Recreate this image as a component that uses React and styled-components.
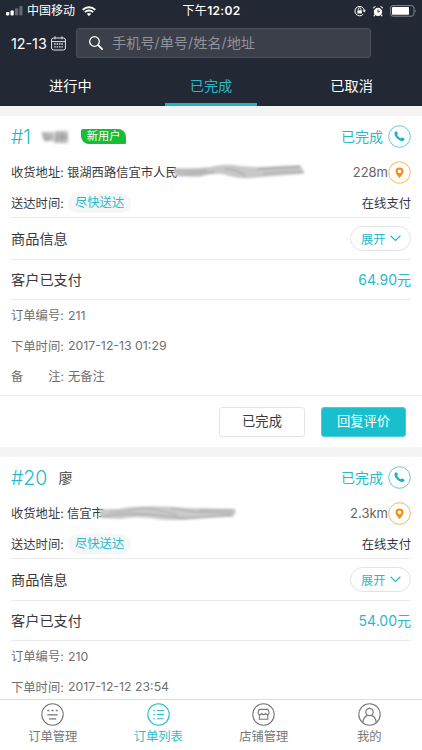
import React from 'react';
import styled, { createGlobalStyle } from 'styled-components';

// Design
const GlobalStyle = createGlobalStyle`
  * {
    box-sizing: border-box;
  }

  body {
    margin: 0;
    background: #f4f4f5;
    font-family: Inter, 'Noto Sans CJK SC', sans-serif;
    overflow: hidden;
  }
`;

const Screen = styled.div`
  display: flex;
  flex-direction: column;
  width: 422px;
  height: 750px;
  overflow: hidden;
  color: #3a3a3c;
  white-space: nowrap;
`;

const Header = styled.header`
  flex: none;
  height: 106px;
  background: #232934;
  color: #fff;
`;

const StatusBar = styled.div`
  display: grid;
  grid-template-columns: 1fr auto 1fr;
  align-items: center;
  height: 21px;
  padding: 1px 5px 0 6px;
  font-size: 12px;
  line-height: 18px;
  font-weight: 500;
`;

const Carrier = styled.div`
  display: flex;
  align-items: center;

  & span {
    margin: 0 7px 0 4px;
    font-weight: 400;
  }
`;

const Clock = styled.div`
  font-weight: 400;
  letter-spacing: 0.3px;

  & b {
    font-weight: 600;
  }
`;

const Indicators = styled.div`
  display: flex;
  justify-content: flex-end;
  align-items: center;
  gap: 7px;
`;

const SearchRow = styled.div`
  display: flex;
  align-items: center;
  height: 30px;
  margin-top: 7px;
  padding-left: 11px;
`;

const DatePick = styled.div`
  display: flex;
  align-items: center;
  gap: 4px;
  width: 65px;
  font-size: 14.3px;
`;

const SearchBox = styled.div`
  display: flex;
  align-items: center;
  gap: 9px;
  width: 295px;
  height: 30px;
  padding-left: 12px;
  border: 1px solid #4c515b;
  border-radius: 3px;
  background: #3a3f4a;
  color: #90939a;
  font-size: 14.2px;
  line-height: 28px;
`;

const Tabs = styled.nav`
  display: grid;
  grid-template-columns: repeat(3, 1fr);
  justify-items: center;
  height: 40px;
  margin-top: 8px;
`;

const Tab = styled.div`
  width: 92px;
  height: 40px;
  border-bottom: 3px solid ${p => (p.$active ? '#1bb4c4' : 'transparent')};
  color: ${p => (p.$active ? '#2bb8c8' : '#fff')};
  font-size: 14.2px;
  line-height: 39px;
  text-align: center;
`;

const List = styled.main`
  flex: 1;
  min-height: 0;
  display: flex;
  flex-direction: column;
  gap: 10px;
  padding-top: 10px;
  overflow: hidden;
`;

const Card = styled.section`
  flex: none;
  height: 331px;
  background: #fff;
`;

const Section = styled.div`
  margin: 0 11px;
  border-bottom: 1px solid #ebebed;
`;

const Line = styled.div`
  display: flex;
  align-items: center;
  justify-content: space-between;
  height: ${p => p.$height}px;
  font-size: ${p => p.$size || 12.3}px;
`;

const Title = styled.span`
  padding-bottom: 2px;
`;

const Group = styled.div`
  display: flex;
  align-items: center;
`;

const OrderNumber = styled.span`
  margin-right: 11px;
  color: #1fb9c9;
  font-size: 19.5px;
  font-weight: 300;
`;

const Customer = styled.span`
  color: #444;
  font-size: 14px;
`;

const NameSlot = styled(Customer)`
  display: flex;
  padding-bottom: 2px;
  margin-left: ${p => (p.$hidden ? -2 : 0)}px;
`;

const NewBadge = styled.span`
  margin-left: 11px;
  width: 45px;
  height: 15px;
  border-radius: 2px 8px 1px 8px;
  background: #16bd35;
  color: #fff;
  font-size: 11.2px;
  line-height: 15px;
  text-align: center;
`;

const State = styled.span`
  margin-right: 5px;
  padding-bottom: 2px;
  color: #2ab9c8;
  font-size: 14px;
`;

const Address = styled(Group)`
  padding-bottom: 1px;
`;

const Distance = styled.span`
  padding-bottom: 1px;
  color: #666;
  font-size: 13px;
`;

const Label = styled.span`
  display: flex;
  justify-content: space-between;
  width: 53px;
  margin-right: ${p => p.$gap || 3}px;
`;

const Smudged = styled.span`
  display: flex;
  margin-left: -5px;
`;

const TimePill = styled.span`
  height: 20px;
  padding: 0 7px;
  border-radius: 10px;
  background: #f5f6f7;
  color: #2ab9c8;
  line-height: 20px;
`;

const Payment = styled.span`
  color: #333541;
`;

const Expand = styled.button`
  display: flex;
  align-items: center;
  gap: 5px;
  width: 61px;
  height: 25px;
  padding: 0 0 0 10px;
  border: 1px solid #e2e3e5;
  border-radius: 13px;
  background: #fff;
  color: #2ab9c8;
  font: inherit;
  font-size: 12.2px;
`;

const Price = styled.span`
  padding-bottom: 2px;
  color: #2ab9c8;
  font-size: 14px;
`;

const Detail = styled.div`
  display: flex;
  align-items: center;
  height: 30.6px;
  padding: 0 11px;
  color: #707070;
  font-size: 12.3px;
`;

const Actions = styled.div`
  display: flex;
  justify-content: flex-end;
  gap: 16px;
  margin-top: 3px;
  padding: 11px 16px 10px 0;
  border-top: 1px solid #ebebed;
`;

const Button = styled.button`
  width: ${p => (p.$primary ? 85 : 86)}px;
  height: 30px;
  padding: 0;
  border: 1px solid ${p => (p.$primary ? '#4acbd5' : '#e4e4e6')};
  border-radius: 3px;
  background: ${p => (p.$primary ? '#19bfcd' : '#fff')};
  color: ${p => (p.$primary ? '#fff' : '#3a3a3c')};
  font: inherit;
  font-size: 13.3px;
  line-height: 27px;
`;

const BottomNav = styled.nav`
  flex: none;
  display: grid;
  grid-template-columns: repeat(4, 1fr);
  height: 51px;
  border-top: 1px solid #dedee0;
  background: #fff;
`;

const NavItem = styled.div`
  display: flex;
  flex-direction: column;
  align-items: center;
  padding-top: 3px;
  color: ${p => (p.$active ? '#2bbdcb' : '#777')};
  font-size: 12.3px;
  line-height: 22px;
`;

// Icons
const SignalIcon = () => (
  <svg width='17' height='10' viewBox='0 0 17 10' fill='#fff'>
    <rect x='0' y='6' width='3.3' height='3.4' rx='.8' />
    <rect x='4.5' y='4.5' width='3.3' height='4.9' rx='.8' />
    <rect x='9' y='2.2' width='3.2' height='7.2' rx='.8' fill='#646973' />
    <rect x='13.3' y='0' width='3.2' height='9.4' rx='.8' fill='#646973' />
  </svg>
);

const WifiIcon = () => (
  <svg width='14' height='11' viewBox='0 0 14 11' fill='none' stroke='#fff' strokeWidth='1.9'>
    <path d='M.7 3.9C4.2.4 9.8.4 13.3 3.9' />
    <path d='M2.9 6.2c2.3-2.3 5.9-2.3 8.2 0' />
    <path d='M4.8 7.8c1.2-1.2 3.2-1.2 4.4 0L7 10.3z' fill='#fff' stroke='none' />
  </svg>
);

const LockIcon = () => (
  <svg width='12' height='12' viewBox='0 0 12 12' fill='none' stroke='#fff'>
    <path d='M9.2 9.2A4.7 4.7 0 1 1 10.3 5.5' />
    <path d='M8.5 5.3h3.4L10.2 7.6z' fill='#fff' stroke='none' />
    <rect x='3.4' y='5.3' width='4.4' height='3.2' fill='#fff' stroke='none' />
    <path d='M4.3 5.4V4.1a1.3 1.3 0 0 1 2.6 0v1.3' strokeWidth='.8' />
  </svg>
);

const AlarmIcon = () => (
  <svg width='10' height='11' viewBox='0 0 10 11' fill='#fff'>
    <circle cx='5' cy='5.9' r='4.2' />
    <path d='M.2 2.8A2 2 0 0 1 2.9.4zM9.8 2.8A2 2 0 0 0 7.1.4z' />
    <path d='M1.9 8.6l-1 1.7M8.1 8.6l1 1.7' stroke='#fff' strokeWidth='1.2' />
    <path d='M5 3.4v2.8l2-1.2' fill='none' stroke='#232934' strokeWidth='.9' />
  </svg>
);

const BatteryIcon = () => (
  <svg width='27' height='12' viewBox='0 0 27 12' fill='none'>
    <rect x='.6' y='.6' width='23.4' height='10.6' rx='2.4' stroke='#858991' />
    <rect x='2' y='2' width='17' height='7.8' rx='.8' fill='#fff' />
    <path d='M25.2 4.2q1.5 1.7 0 3.4z' fill='#858991' />
  </svg>
);

const CalendarIcon = () => (
  <svg width='15' height='15' viewBox='0 0 15 15' fill='none' stroke='#e4e5e8'>
    <rect x='.6' y='2' width='13.8' height='12' rx='2' />
    <path d='M.6 5.6h13.8M4 .3v3M11 .3v3' />
    <path d='M3.2 8h8.8M3.2 10.8h8.8' strokeWidth='1.3' strokeDasharray='1.5 .9' />
  </svg>
);

const SearchIcon = () => (
  <svg width='14' height='14' viewBox='0 0 14 14' fill='none' stroke='#fff' strokeLinecap='round'>
    <circle cx='5.5' cy='5.5' r='4.8' strokeWidth='1.3' />
    <path d='M9.2 9.2l3.9 3.9' strokeWidth='1.8' />
  </svg>
);

const PhoneIcon = () => (
  <svg width='23' height='23' viewBox='0 0 23 23'>
    <circle cx='11.5' cy='11.5' r='10.8' fill='none' stroke='#3cbdca' strokeWidth='.8' />
    <path
      d='M7.4 6.5q.8-.7 1.6.2l.7 1.2q.4.8-.6 1.5c.6 1.6 2 3.1 3.7 3.9.8-.9 1.3-1.1 2.1-.6l1.2.9q.9.7.1 1.5c-1.2 1.3-3.1 1.1-5.1-.2C8.7 13.3 6.8 11.2 6.5 8.9q-.2-1.6.9-2.4z'
      fill='#16b3c3'
    />
  </svg>
);

const PinIcon = () => (
  <svg width='23' height='23' viewBox='0 0 23 23'>
    <circle cx='11.5' cy='11.5' r='10.8' fill='none' stroke='#f7ad4b' strokeWidth='.9' />
    <path
      fillRule='evenodd'
      d='M11.5 6.4a4 4 0 0 0-4 4c0 2.3 1.8 3.7 4 6.6 2.2-2.9 4-4.3 4-6.6a4 4 0 0 0-4-4zm0 2a1.9 1.9 0 1 1 0 3.8 1.9 1.9 0 0 1 0-3.8z'
      fill='#fb8c0c'
    />
  </svg>
);

const ChevronIcon = () => (
  <svg width='11' height='7' viewBox='0 0 11 7' fill='none' stroke='#2ab9c8' strokeWidth='1.2'>
    <path d='M.6.8l4.9 4.7L10.4.8' />
  </svg>
);

const NavIcon = ({ children }) => (
  <svg width='23' height='23' viewBox='0 0 23 23' fill='none' stroke='currentColor' strokeWidth='1.1'>
    <circle cx='11.5' cy='11.5' r='10.7' />
    {children}
  </svg>
);

const ManageIcon = () => (
  <NavIcon>
    <path d='M6.3 7.5h2M10.5 7.5h2M14.7 7.5h2' strokeWidth='1.7' />
    <path d='M6.3 11.8h10.4M8 15.8h7.2' strokeWidth='1.3' />
  </NavIcon>
);

const ListIcon = () => (
  <NavIcon>
    <path d='M6.3 7.5h1.6M6.3 11.6h1.6M6.3 15.7h1.6M9.8 7.5h7M9.8 11.6h7M9.8 15.7h7' />
  </NavIcon>
);

const ShopIcon = () => (
  <NavIcon>
    <path d='M8 6.4h7.2q1 0 1.3 1l.5 2.3q.1 1.7-1.6 1.9-1.3.1-1.9-1-.7 1-1.9 1t-1.9-1q-.7 1.1-2 1-1.7-.2-1.6-1.9l.5-2.3q.3-1 1.4-1z' />
    <path d='M7.4 11.6v4.6h8.4v-4.6' />
  </NavIcon>
);

const MineIcon = () => (
  <NavIcon>
    <circle cx='11.5' cy='9' r='3.7' strokeWidth='1.2' />
    <path d='M4.8 19.5c.5-4 2.3-6.2 4.7-7.1M18.2 19.5c-.5-4-2.3-6.2-4.7-7.1' strokeWidth='1.2' />
  </NavIcon>
);

// Smudges that hide private data
const NameSmudge = () => (
  <svg width='30' height='18' viewBox='0 0 30 18'>
    <filter id='nameBlur' x='-20%' y='-20%' width='140%' height='140%'>
      <feGaussianBlur stdDeviation='1.6' />
    </filter>
    <g filter='url(#nameBlur)'>
      <path d='M1 5h13v9H4zM15 4h13v12H14z' fill='#bdbdbd' />
      <path d='M5 6v8M10 9l-3 5M17 6v9M22 5v10M19 10h9' stroke='#999' strokeWidth='1.8' />
    </g>
  </svg>
);

const LongSmudge = () => (
  <svg width='134' height='18' viewBox='0 0 134 18'>
    <filter id='longBlur' x='-5%' y='-20%' width='110%' height='140%'>
      <feGaussianBlur stdDeviation='.9' />
    </filter>
    <g filter='url(#longBlur)'>
      <path d='M0 5Q18 6 37 4q16-4 30-1 20 2 36 0l24-1 5 8-3 1Q99 13 79 15q-17 1-29-4-12-1-24 3L2 13z' fill='#c8c8c8' />
      <path d='M4 12q22-1 37-3M90 11q20-2 39-2' fill='none' stroke='#9c9c9c' strokeWidth='1.2' />
      <path d='M3 8q20 1 31-1M52 6q12 0 20 7M85 6l42-2' fill='none' stroke='#b0b0b0' strokeWidth='2' />
    </g>
  </svg>
);

const ShortSmudge = () => (
  <svg width='138' height='18' viewBox='0 0 138 18'>
    <filter id='shortBlur' x='-5%' y='-20%' width='110%' height='140%'>
      <feGaussianBlur stdDeviation='.9' />
    </filter>
    <g filter='url(#shortBlur)'>
      <path d='M0 5q17 1 31-2 32-2 57 1l48 1 1 3-3 5q-18 0-38 2-24 3-45-1-17-2-29 1L2 14z' fill='#cacaca' />
      <path d='M4 13q16-3 34-3t44 4q22 0 50-3M100 6l34 0' fill='none' stroke='#9d9d9d' strokeWidth='1.2' />
      <path d='M10 8q20 0 29-3t39 6M72 4l25 4 37 1' fill='none' stroke='#b2b2b2' strokeWidth='1.5' />
    </g>
  </svg>
);

// Data
const tabs = ['进行中', '已完成', '已取消'];

const orders = [
  {
    index: 1,
    name: <NameSmudge />,
    isNew: true,
    address: '银湖西路信宜市人民',
    smudge: <LongSmudge />,
    distance: '228m',
    price: '64.90',
    number: '211',
    time: '2017-12-13 01:29',
    note: '无备注',
    actions: true
  },
  {
    index: 20,
    name: '廖',
    isNew: false,
    address: '信宜市',
    smudge: <ShortSmudge />,
    distance: '2.3km',
    price: '54.00',
    number: '210',
    time: '2017-12-12 23:54'
  }
];

const navItems = [
  { label: '订单管理', Icon: ManageIcon },
  { label: '订单列表', Icon: ListIcon },
  { label: '店铺管理', Icon: ShopIcon },
  { label: '我的', Icon: MineIcon }
];

const Order = ({ order }) => (
  <Card>
    <Section>
      <Line $height={41}>
        <Group>
          <OrderNumber>#{order.index}</OrderNumber>
          <NameSlot $hidden={order.isNew}>{order.name}</NameSlot>
          {order.isNew && <NewBadge>新用户</NewBadge>}
        </Group>
        <Group>
          <State>已完成</State>
          <PhoneIcon />
        </Group>
      </Line>
      <Line $height={31}>
        <Address>
          <Label>收货地址:</Label>
          {order.address}
          <Smudged>{order.smudge}</Smudged>
        </Address>
        <Group>
          <Distance>{order.distance}</Distance>
          <PinIcon />
        </Group>
      </Line>
      <Line $height={29}>
        <Group>
          <Label $gap={4}>送达时间:</Label>
          <TimePill>尽快送达</TimePill>
        </Group>
        <Payment>在线支付</Payment>
      </Line>
    </Section>
    <Section>
      <Line $height={41} $size={14.2}>
        <Title>商品信息</Title>
        <Expand>
          展开
          <ChevronIcon />
        </Expand>
      </Line>
    </Section>
    <Section>
      <Line $height={39} $size={14.2}>
        <Title>客户已支付</Title>
        <Price>{order.price}元</Price>
      </Line>
    </Section>
    <Detail>
      <Label $gap={4}>订单编号:</Label>
      {order.number}
    </Detail>
    <Detail>
      <Label $gap={4}>下单时间:</Label>
      {order.time}
    </Detail>
    {order.note && (
      <Detail>
        <Label $gap={4}>
          <span>备</span>
          <span>注:</span>
        </Label>
        {order.note}
      </Detail>
    )}
    {order.actions && (
      <Actions>
        <Button>已完成</Button>
        <Button $primary>回复评价</Button>
      </Actions>
    )}
  </Card>
);

const App = () => (
  <Screen>
    <GlobalStyle />
    <Header>
      <StatusBar>
        <Carrier>
          <SignalIcon />
          <span>中国移动</span>
          <WifiIcon />
        </Carrier>
        <Clock>
          下午<b>12:02</b>
        </Clock>
        <Indicators>
          <LockIcon />
          <AlarmIcon />
          <BatteryIcon />
        </Indicators>
      </StatusBar>
      <SearchRow>
        <DatePick>
          12-13
          <CalendarIcon />
        </DatePick>
        <SearchBox>
          <SearchIcon />
          手机号/单号/姓名/地址
        </SearchBox>
      </SearchRow>
      <Tabs>
        {tabs.map((tab, i) => (
          <Tab key={tab} $active={i === 1}>
            {tab}
          </Tab>
        ))}
      </Tabs>
    </Header>

    <List>
      {orders.map(order => (
        <Order key={order.index} order={order} />
      ))}
    </List>

    <BottomNav>
      {navItems.map(({ label, Icon }, i) => (
        <NavItem key={label} $active={i === 1}>
          <Icon />
          {label}
        </NavItem>
      ))}
    </BottomNav>
  </Screen>
);

export default App;
